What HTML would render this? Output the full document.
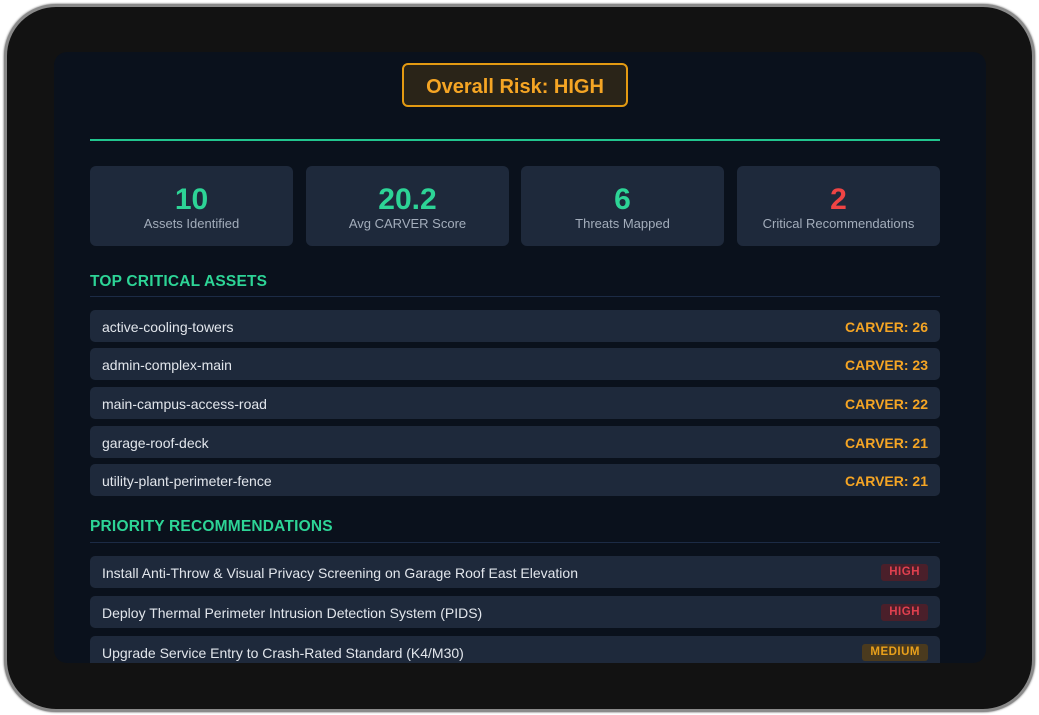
<!DOCTYPE html>
<html><head><style>
body{margin:0;width:1039px;height:715px;background:#fff;position:relative;overflow:hidden;font-family:"Liberation Sans",sans-serif}
.frame{position:absolute;left:4px;top:4px;width:1025px;height:702px;border-radius:52px;background:#121212;border:3px solid #8a8a8a;box-shadow:0 0 2px #555}
.screen{position:absolute;left:54px;top:52px;width:932px;height:611px;border-radius:13px;background:#0a111c;overflow:hidden}
.abs{position:absolute}
.badge{left:348px;top:11px;width:222px;height:40px;border:2px solid #e39a12;border-radius:6px;background:#2a2418;color:#f5a524;font-weight:bold;font-size:20px;text-align:center;line-height:44px}
.line{left:36px;top:87px;width:850px;height:2px;background:#22c58e}
.card{top:114px;width:203px;height:80px;background:#1e293b;border-radius:6px;text-align:center}
.card b{display:block;font-size:30px;color:#2dd496;margin-top:18px;line-height:32px}
.card span{display:block;font-size:13px;color:#a3adbb;margin-top:0}
.h{left:36px;font-size:15.5px;font-weight:bold;color:#2dd496;letter-spacing:.2px}
.hl{left:36px;width:850px;height:1px;background:#1c2b45}
.row{left:36px;width:850px;height:32px;background:#1e293b;border-radius:5px;color:#e2e6ec;font-size:14px;line-height:34px}
.row .t{position:absolute;left:12px}
.row .c{position:absolute;right:12px;color:#f5a524;font-weight:bold}
.tag{position:absolute;right:12px;top:8px;height:17px;line-height:17px;font-size:11.5px;font-weight:bold;padding:0 8px;border-radius:3px;letter-spacing:.5px}
.hi{background:#4a1f2a;color:#e0404f}
.md{background:#4a3a1e;color:#e9a01b}
</style></head><body>
<div class="frame"></div>
<div class="screen">
<div class="abs badge">Overall Risk: HIGH</div>
<div class="abs line"></div>
<div class="abs card" style="left:36px"><b>10</b><span>Assets Identified</span></div>
<div class="abs card" style="left:252px"><b>20.2</b><span>Avg CARVER Score</span></div>
<div class="abs card" style="left:467px"><b>6</b><span>Threats Mapped</span></div>
<div class="abs card" style="left:683px"><b style="color:#ef4444">2</b><span>Critical Recommendations</span></div>
<div class="abs h" style="top:221px">TOP CRITICAL ASSETS</div>
<div class="abs hl" style="top:244px"></div>
<div class="abs row" style="top:258px"><span class="t">active-cooling-towers</span><span class="c">CARVER: 26</span></div>
<div class="abs row" style="top:296px"><span class="t">admin-complex-main</span><span class="c">CARVER: 23</span></div>
<div class="abs row" style="top:335px"><span class="t">main-campus-access-road</span><span class="c">CARVER: 22</span></div>
<div class="abs row" style="top:374px"><span class="t">garage-roof-deck</span><span class="c">CARVER: 21</span></div>
<div class="abs row" style="top:412px"><span class="t">utility-plant-perimeter-fence</span><span class="c">CARVER: 21</span></div>
<div class="abs h" style="top:466px">PRIORITY RECOMMENDATIONS</div>
<div class="abs hl" style="top:490px"></div>
<div class="abs row" style="top:504px"><span class="t">Install Anti-Throw &amp; Visual Privacy Screening on Garage Roof East Elevation</span><span class="tag hi">HIGH</span></div>
<div class="abs row" style="top:544px"><span class="t">Deploy Thermal Perimeter Intrusion Detection System (PIDS)</span><span class="tag hi">HIGH</span></div>
<div class="abs row" style="top:584px"><span class="t">Upgrade Service Entry to Crash-Rated Standard (K4/M30)</span><span class="tag md">MEDIUM</span></div>
</div>
</body></html>
